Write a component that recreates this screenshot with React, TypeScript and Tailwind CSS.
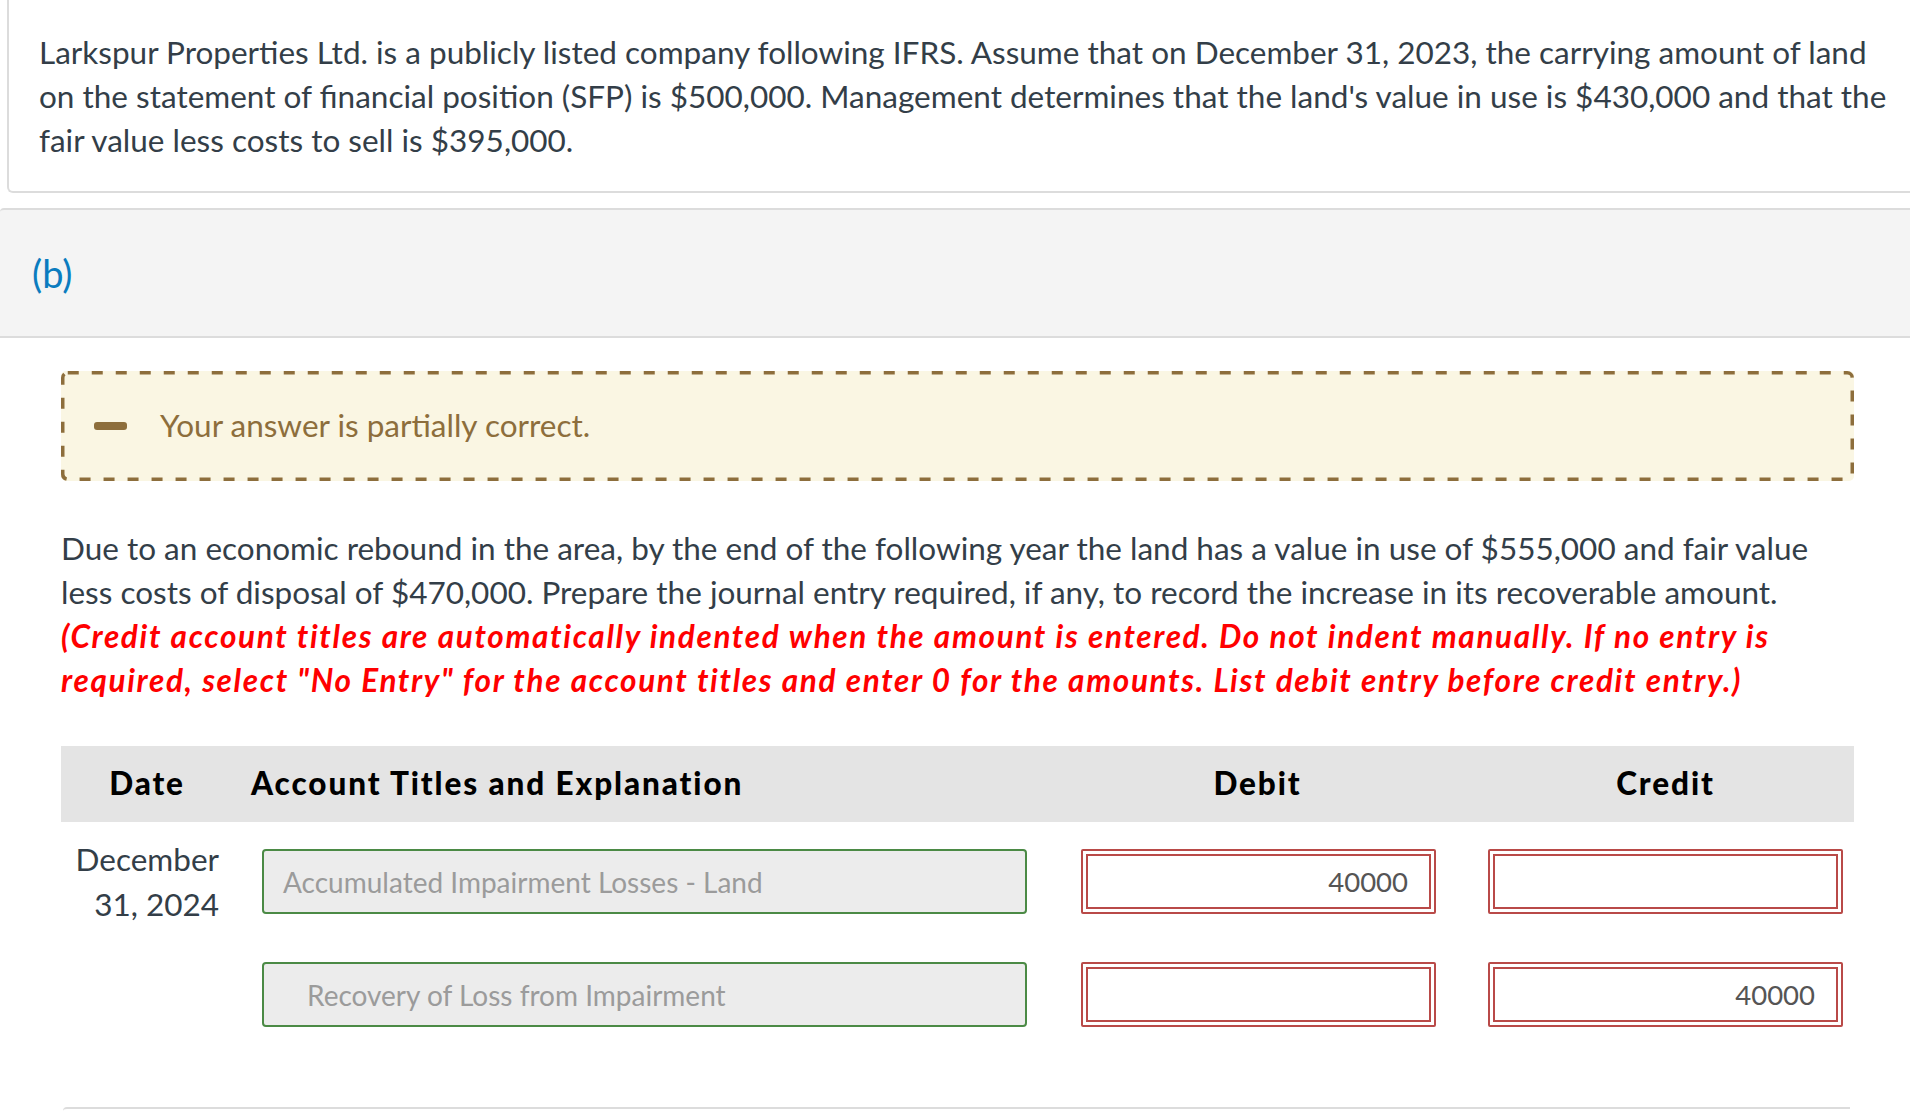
import React from 'react';

const font = { fontFamily: 'Lato, "Open Sans", Arial, sans-serif' };

function AccountInput({ text, indent = false }: { text: string; indent?: boolean }) {
  return (
    <div
      className={`h-[65px] w-[765px] border-2 border-[#4b8a45] bg-[#ececec] rounded-[4px] flex items-center text-[28px] text-[#9b9b9b] ${
        indent ? 'pl-[43px]' : 'pl-[19px]'
      }`}
    >
      {text}
    </div>
  );
}

function AmountInput({ value }: { value?: string }) {
  return (
    <div className="h-[65px] w-[355px] border-2 border-[#b94a48] rounded-[2px] p-[3px] bg-white">
      <div className="h-full w-full border-2 border-[#b94a48] flex items-center justify-end pr-[21px] text-[27.5px] text-[#555]">
        {value}
      </div>
    </div>
  );
}

export default function App() {
  return (
    <div className="min-h-[1111px] w-full bg-white overflow-hidden" style={font}>
      {/* question card */}
      <div className="ml-[7px] border-l-2 border-b-2 border-[#dcdcdc] rounded-bl-[6px] pl-[30px] pt-[30px] pb-[29px]">
        <p className="text-[31.5px] leading-[44px] text-[#333e48]">
          Larkspur Properties Ltd. is a publicly listed company following IFRS. Assume that on December 31, 2023, the
          carrying amount of land on the statement of financial position (SFP) is $500,000. Management determines that
          the land's value in use is $430,000 and that the fair value less costs to sell is $395,000.
        </p>
      </div>

      {/* part header */}
      <div className="mt-[15px] h-[130px] border-y-2 border-[#dcdcdc] bg-[#f4f4f4] rounded-tl-[4px] flex items-center pl-[32px]">
        <span className="text-[38px] text-[#0b7cbf]">(b)</span>
      </div>

      <div className="ml-[61px] w-[1793px]">
        {/* feedback */}
        <div className="relative mt-[33px] h-[110px] bg-[#faf6e3] rounded-[5px] flex items-center pl-[33px]">
          <svg className="absolute inset-0" width="1793" height="110" viewBox="0 0 1793 110">
            <rect
              x="1.75"
              y="1.75"
              width="1789.5"
              height="106.5"
              rx="5"
              fill="none"
              stroke="#8d6e3c"
              strokeWidth="3.5"
              strokeDasharray="11 13"
            />
          </svg>
          <span className="w-[33px] h-[8px] rounded-[3px] bg-[#8d6e3c]" />
          <span className="ml-[33px] text-[31.5px] text-[#8d6e3c]">Your answer is partially correct.</span>
        </div>

        {/* instructions */}
        <div className="mt-[45px] text-[31.5px] leading-[44px]">
          <p className="text-[#333e48]">
            Due to an economic rebound in the area, by the end of the following year the land has a value in use of
            $555,000 and fair value less costs of disposal of $470,000. Prepare the journal entry required, if any, to
            record the increase in its recoverable amount.
          </p>
          <p className="italic font-bold tracking-[1.65px] text-[#ff0000]">
            (Credit account titles are automatically indented when the amount is entered. Do not indent manually. If no
            entry is required, select "No Entry" for the account titles and enter 0 for the amounts. List debit entry
            before credit entry.)
          </p>
        </div>

        {/* table */}
        <div className="mt-[44px]">
          <div className="h-[76px] bg-[#e4e4e4] flex items-center text-[31.5px] font-black tracking-[1.9px] text-black">
            <div className="w-[179px] text-center pr-[7px]">Date</div>
            <div className="w-[810px] pl-[11px]">Account Titles and Explanation</div>
            <div className="w-[415px] text-center">Debit</div>
            <div className="flex-1 text-center pl-[12px]">Credit</div>
          </div>

          <div className="mt-[15px] h-[113px] flex items-start">
            <div className="w-[179px] text-right pr-[21px] text-[31.5px] leading-[45px] text-[#333e48]">
              December
              <br />
              31, 2024
            </div>
            <div className="w-[810px] pl-[22px] mt-[12px]">
              <AccountInput text="Accumulated Impairment Losses - Land" />
            </div>
            <div className="w-[415px] pl-[31px] mt-[12px]">
              <AmountInput value="40000" />
            </div>
            <div className="flex-1 pl-[23px] mt-[12px]">
              <AmountInput />
            </div>
          </div>

          <div className="h-[113px] flex items-start">
            <div className="w-[179px]" />
            <div className="w-[810px] pl-[22px] mt-[12px]">
              <AccountInput text="Recovery of Loss from Impairment" indent />
            </div>
            <div className="w-[415px] pl-[31px] mt-[12px]">
              <AmountInput />
            </div>
            <div className="flex-1 pl-[23px] mt-[12px]">
              <AmountInput value="40000" />
            </div>
          </div>
        </div>

        <div className="mt-[44px] border-t-2 border-[#dcdcdc] rounded-tl-[4px] mr-[4px] ml-[2px] h-[10px]" />
      </div>
    </div>
  );
}
